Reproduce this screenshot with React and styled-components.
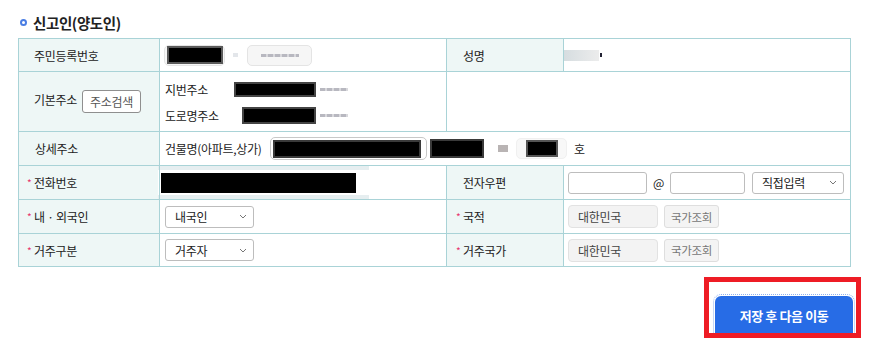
import React from "react";
import styled, { createGlobalStyle } from "styled-components";

const GlobalStyle = createGlobalStyle`
  html, body { margin: 0; padding: 0; background: #fff; }
  body {
    font-family: "Noto Sans CJK KR", "Noto Sans", sans-serif;
    color: #222;
  }
  * { box-sizing: border-box; }
`;

const Page = styled.div`
  width: 878px;
  padding: 10px 17px 0 18px;
`;

const Title = styled.h2`
  display: flex;
  align-items: center;
  gap: 6px;
  margin: 0 0 4px 2px;
  height: 24px;
  font-size: 14.5px;
  font-weight: 700;
  letter-spacing: -0.4px;
  color: #222;
`;

const Ring = styled.span`
  width: 7px;
  height: 7px;
  border: 2px solid #4a7ee4;
  border-radius: 50%;
  flex: none;
`;

const Table = styled.table`
  width: 833px;
  border-collapse: collapse;
  table-layout: fixed;
  font-size: 12px;
  letter-spacing: -0.3px;
`;

const Row = styled.tr`
  height: ${(p) => p.$h}px;
`;

const Label = styled.th`
  background: #eef7f6;
  border: 1px solid #a9d3d7;
  text-align: left;
  font-weight: 400;
  padding: 0 0 0 ${(p) => p.$pl || 15}px;
  color: #222;
  white-space: nowrap;
`;

const Star = styled.span`
  display: inline-block;
  width: 7px;
  margin-left: -7px;
  color: #e8336b;
  font-size: 10px;
  vertical-align: 1px;
`;

const Cell = styled.td`
  border: 1px solid #a9d3d7;
  padding: 0 0 0 ${(p) => p.$pl ?? 4}px;
  background: #fff;
`;

const Line = styled.div`
  display: flex;
  align-items: center;
  height: ${(p) => p.$h || 26}px;
`;

const Stack = styled.div`
  display: flex;
  flex-direction: column;
  padding-top: 1px;
`;

const SubLabel = styled.span`
  display: inline-block;
  width: ${(p) => p.$w}px;
  flex: none;
  white-space: nowrap;
`;

const GreyField = styled.div`
  display: flex;
  align-items: center;
  justify-content: ${(p) => (p.$center ? "center" : "flex-start")};
  width: ${(p) => p.$w}px;
  height: ${(p) => p.$h || 21}px;
  border: 1px solid ${(p) => p.$line || "#e4e4e4"};
  border-radius: 5px;
  background: ${(p) => p.$bg || "#f6f6f6"};
  padding: 0 ${(p) => p.$pad ?? 3}px;
  margin-left: ${(p) => p.$ml || 0}px;
  flex: none;
`;

const Black = styled.div`
  width: ${(p) => p.$w}px;
  height: ${(p) => p.$h}px;
  background: #000;
  margin-left: ${(p) => p.$ml || 0}px;
  box-shadow: 0 0 0 ${(p) => (p.$halo ? 2 : 0)}px ${(p) => p.$halo || "transparent"};
  flex: none;
`;

const Dots = styled.div`
  width: ${(p) => p.$w}px;
  height: 3px;
  margin-left: ${(p) => p.$ml || 0}px;
  background: repeating-linear-gradient(90deg, #b8b8c0 0 5px, #d8d8dc 5px 7px);
  flex: none;
`;

const Bit = styled.div`
  width: ${(p) => p.$w}px;
  height: ${(p) => p.$h}px;
  background: ${(p) => p.$c};
  margin-left: ${(p) => p.$ml || 0}px;
  flex: none;
`;

const SmallBtn = styled.button`
  height: 23px;
  width: ${(p) => p.$w}px;
  padding: 0;
  margin-left: ${(p) => p.$ml || 0}px;
  border: 1px solid ${(p) => (p.$soft ? "#dedede" : "#8f8f8f")};
  border-radius: 3px;
  background: ${(p) => (p.$soft ? "#f4f4f4" : "#fff")};
  color: ${(p) => (p.$soft ? "#777" : "#555")};
  font-family: inherit;
  font-size: ${(p) => (p.$soft ? 11.5 : 12)}px;
  letter-spacing: -0.3px;
  cursor: pointer;
  vertical-align: middle;
`;

const TextInput = styled.div`
  width: ${(p) => p.$w}px;
  height: 22px;
  border: 1px solid #bdbdbd;
  border-radius: 3px;
  background: #fff;
  flex: none;
`;

const SelectBox = styled.div`
  display: flex;
  align-items: center;
  justify-content: space-between;
  width: ${(p) => p.$w}px;
  height: 22px;
  margin-left: ${(p) => p.$ml || 0}px;
  padding: 0 6px 0 9px;
  border: 1px solid #bdbdbd;
  border-radius: 3px;
  background: #fff;
  flex: none;
`;

const ReadOnly = styled.div`
  display: flex;
  align-items: center;
  width: 90px;
  height: 23px;
  padding-left: 9px;
  border: 1px solid #e2e2e2;
  border-radius: 4px;
  background: #f3f3f3;
  color: #444;
  flex: none;
`;

const At = styled.span`
  margin: 0 6px 0 6px;
  font-size: 12px;
`;

const Ho = styled.span`
  margin-left: 7px;
`;

const Redacted = styled.div`
  display: flex;
  align-items: center;
  height: 33px;
  width: 211px;
  margin-left: -3px;
  padding-left: 3px;
  background: linear-gradient(180deg, #e6eef0 0 4px, #fff 4px 29px, #e6eef0 29px);
`;

const Footer = styled.div`
  display: flex;
  justify-content: flex-end;
  margin-top: 10px;
`;

const Highlight = styled.div`
  width: 157px;
  height: 61px;
  border: 5px solid #ee1c25;
  padding: 14px 0 0 6px;
  overflow: hidden;
`;

const PrimaryButton = styled.button`
  width: 138px;
  height: 42px;
  border: none;
  border-radius: 6px;
  background: #276ce6;
  color: #fff;
  font-family: inherit;
  font-size: 13px;
  font-weight: 700;
  letter-spacing: -0.4px;
  outline: 1px dotted #8fb2f0;
  outline-offset: 1px;
  padding-bottom: 4px;
  cursor: pointer;
  white-space: pre;
`;

const Chevron = () => (
  <svg width="8" height="5" viewBox="0 0 8 5">
    <polyline points="1,1 4,4 7,1" fill="none" stroke="#777" strokeWidth="1" />
  </svg>
);

const Select = ({ w, ml, children }) => (
  <SelectBox $w={w} $ml={ml}>
    <span>{children}</span>
    <Chevron />
  </SelectBox>
);

export default function App() {
  return (
    <>
      <GlobalStyle />
      <Page>
        <Title>
          <Ring />
          신고인(양도인)
        </Title>
        <Table>
          <colgroup>
            <col style={{ width: 141 }} />
            <col style={{ width: 287 }} />
            <col style={{ width: 117 }} />
            <col style={{ width: 287 }} />
          </colgroup>
          <tbody>
            <Row $h={33}>
              <Label>주민등록번호</Label>
              <Cell $pl={4}>
                <Line $h={31}>
                  <GreyField $w={61}>
                    <Black $w={52} $h={14} $ml={1} $halo="#5a5a5a" />
                  </GreyField>
                  <Bit $w={5} $h={4} $c="#e3e6ea" $ml={8} />
                  <GreyField $w={65} $ml={9} $center>
                    <Dots $w={38} />
                  </GreyField>
                </Line>
              </Cell>
              <Label $pl={16}>성명</Label>
              <Cell $pl={0}>
                <Line $h={31}>
                  <Bit $w={35} $h={11} $c="linear-gradient(90deg,#d6dde0,#ececec)" />
                  <Bit $w={2} $h={4} $c="#223" $ml={1} />
                </Line>
              </Cell>
            </Row>
            <Row $h={60}>
              <Label>
                기본주소
                <SmallBtn $w={59} $ml={5}>주소검색</SmallBtn>
              </Label>
              <Cell $pl={5}>
                <Stack>
                  <Line $h={26}>
                    <SubLabel $w={71}>지번주소</SubLabel>
                    <Black $w={78} $h={11} $halo="#444" />
                    <Dots $w={28} $ml={6} />
                  </Line>
                  <Line $h={26}>
                    <SubLabel $w={79}>도로명주소</SubLabel>
                    <Black $w={70} $h={13} $halo="#444" />
                    <Dots $w={28} $ml={6} />
                  </Line>
                </Stack>
              </Cell>
              <Cell colSpan={2} />
            </Row>
            <Row $h={34}>
              <Label $pl={16}>상세주소</Label>
              <Cell colSpan={3} $pl={5}>
                <Line $h={32}>
                  <SubLabel $w={105}>건물명(아파트,상가)</SubLabel>
                  <GreyField $w={157} $h={23} $pad={4} $bg="#fff" $line="#c8c8c8">
                    <Black $w={144} $h={14} $halo="#3a3a3a" />
                  </GreyField>
                  <Black $w={50} $h={15} $ml={5} $halo="#3a3a3a" />
                  <Bit $w={10} $h={7} $c="#b9b4b4" $ml={16} />
                  <GreyField $w={51} $ml={8} $center $bg="#f8f8f8" $line="#f0f0f0">
                    <Black $w={28} $h={13} $halo="#555" />
                  </GreyField>
                  <Ho>호</Ho>
                </Line>
              </Cell>
            </Row>
            <Row $h={34}>
              <Label>
                <Star>*</Star>전화번호
              </Label>
              <Cell $pl={1}>
                <Redacted>
                  <Black $w={195} $h={20} />
                </Redacted>
              </Cell>
              <Label $pl={16}>전자우편</Label>
              <Cell $pl={4}>
                <Line $h={32}>
                  <TextInput $w={79} />
                  <At>@</At>
                  <TextInput $w={75} />
                  <Select w={92} ml={7}>직접입력</Select>
                </Line>
              </Cell>
            </Row>
            <Row $h={34}>
              <Label>
                <Star>*</Star>내 · 외국인
              </Label>
              <Cell $pl={5}>
                <Line $h={32}>
                  <Select w={89}>내국인</Select>
                </Line>
              </Cell>
              <Label $pl={16}>
                <Star>*</Star>국적
              </Label>
              <Cell $pl={4}>
                <Line $h={32}>
                  <ReadOnly>대한민국</ReadOnly>
                  <SmallBtn $soft $w={55} $ml={6}>국가조회</SmallBtn>
                </Line>
              </Cell>
            </Row>
            <Row $h={33}>
              <Label>
                <Star>*</Star>거주구분
              </Label>
              <Cell $pl={5}>
                <Line $h={32}>
                  <Select w={89}>거주자</Select>
                </Line>
              </Cell>
              <Label $pl={16}>
                <Star>*</Star>거주국가
              </Label>
              <Cell $pl={4}>
                <Line $h={32}>
                  <ReadOnly>대한민국</ReadOnly>
                  <SmallBtn $soft $w={55} $ml={6}>국가조회</SmallBtn>
                </Line>
              </Cell>
            </Row>
          </tbody>
        </Table>
        <Footer>
          <Highlight>
            <PrimaryButton>저장 후 다음 이동</PrimaryButton>
          </Highlight>
        </Footer>
      </Page>
    </>
  );
}
